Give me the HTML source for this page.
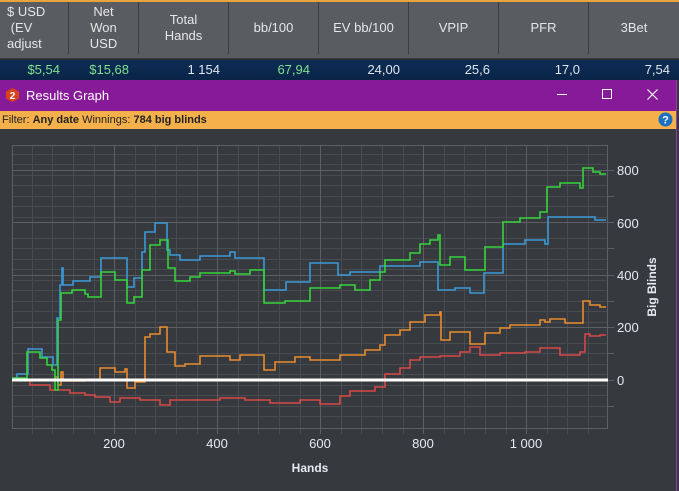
<!DOCTYPE html>
<html><head><meta charset="utf-8"><style>
*{margin:0;padding:0;box-sizing:border-box}
body{width:679px;height:491px;background:#36393d;font-family:"Liberation Sans",sans-serif;overflow:hidden;position:relative}
.hdr{position:absolute;left:0;top:0;width:679px;height:58px;background:#595d61;border-top:2px solid #e8a33c}
.col{position:absolute;top:2px;height:52px;display:flex;align-items:center;justify-content:center;text-align:center;color:#e6e6e6;font-size:13px;line-height:16px;border-right:1px solid #3a3d40}
.row{position:absolute;left:0;top:59px;width:679px;height:21px;background:linear-gradient(#0c2c56,#0a2446);border-top:1px solid #2a2d30}
.v{position:absolute;top:2px;font-size:13px;color:#dfe6ee;text-align:right}
.g{color:#7fe08e}
.title{position:absolute;left:0;top:80px;width:676px;height:31px;background:#871a99;color:#fff;font-size:13px}
.filter{position:absolute;left:0;top:111px;width:676px;height:18px;background:#f4b04a;font-size:11px;color:#222;padding:3px 0 0 2px}
.rb{position:absolute;left:676px;top:80px;width:3px;height:411px;background:#36393d;border-left:1px solid #9b3aad}
</style></head><body>
<div class="hdr"></div>
<div class="col" style="left:0;width:69px;justify-content:flex-start;padding-left:7px;text-align:left">$ USD<br>&nbsp;(EV<br>adjust</div>
<div class="col" style="left:69px;width:70px">Net<br>Won<br>USD</div>
<div class="col" style="left:139px;width:90px">Total<br>Hands</div>
<div class="col" style="left:229px;width:90px">bb/100</div>
<div class="col" style="left:319px;width:90px">EV bb/100</div>
<div class="col" style="left:409px;width:90px">VPIP</div>
<div class="col" style="left:499px;width:90px">PFR</div>
<div class="col" style="left:589px;width:90px;border-right:none">3Bet</div>
<div class="row">
<span class="v g" style="right:619px">$5,54</span>
<span class="v g" style="right:550px">$15,68</span>
<span class="v" style="right:459px">1 154</span>
<span class="v g" style="right:369px">67,94</span>
<span class="v" style="right:279px">24,00</span>
<span class="v" style="right:189px">25,6</span>
<span class="v" style="right:99px">17,0</span>
<span class="v" style="right:9px">7,54</span>
</div>
<div class="title">
<svg style="position:absolute;left:6px;top:8px" width="13" height="14" viewBox="0 0 13 14"><polygon points="6.5,0 13,3.5 13,10.5 6.5,14 0,10.5 0,3.5" fill="#d9401c"/><text x="6.5" y="11" font-size="10" font-weight="bold" fill="#fff" text-anchor="middle" font-family="Liberation Sans">2</text></svg>
<span style="position:absolute;left:26px;top:8px">Results Graph</span>
<div style="position:absolute;left:557px;top:95px"></div>
<div style="position:absolute;left:557px;top:14px;width:10px;height:1px;background:#fff"></div>
<div style="position:absolute;left:602px;top:9px;width:10px;height:10px;border:1px solid #fff"></div>
<svg style="position:absolute;left:647px;top:9px" width="11" height="11"><path d="M0.5 0.5L10.5 10.5M10.5 0.5L0.5 10.5" stroke="#fff" stroke-width="1.2"/></svg>
</div>
<div class="filter">Filter: <b>Any date</b> Winnings: <b>784 big blinds</b>
<svg style="position:absolute;left:658px;top:1px" width="15" height="15"><circle cx="7.5" cy="7.5" r="7" fill="#1a6fc1"/><text x="7.5" y="11.5" font-size="11" font-weight="bold" fill="#fff" text-anchor="middle" font-family="Liberation Sans">?</text></svg></div>
<div class="rb"></div>
<svg style="position:absolute;left:0;top:129px" width="676" height="362" viewBox="0 129 676 362">
<g stroke="#484c50" stroke-width="1">
<path d="M12 154.5H608M12 164.5H608M12 175.5H608M12 185.5H608M12 196.5H608M12 206.5H608M12 217.5H608M12 238.5H608M12 248.5H608M12 259.5H608M12 269.5H608M12 280.5H608M12 290.5H608M12 301.5H608M12 311.5H608M12 322.5H608M12 343.5H608M12 353.5H608M12 364.5H608M12 374.5H608M12 385.5H608M12 395.5H608M12 406.5H608M12 416.5H608"/>
<path d="M32.5 145V434M52.5 145V434M73.5 145V434M94.5 145V434M135.5 145V434M155.5 145V434M176.5 145V434M197.5 145V434M238.5 145V434M258.5 145V434M279.5 145V434M300.5 145V434M341.5 145V434M361.5 145V434M382.5 145V434M403.5 145V434M444.5 145V434M464.5 145V434M485.5 145V434M506.5 145V434M547.5 145V434M567.5 145V434M588.5 145V434"/>
</g>
<g stroke="#5c6064" stroke-width="1" fill="none">
<rect x="12.5" y="145.5" width="595" height="283"/>
<path d="M12 170.5H614M12 222.5H614M12 275.5H614M12 327.5H614M12 380.5H614M608 196.5H614M608 248.5H614M608 301.5H614M608 353.5H614M608 406.5H614"/>
<path d="M114.5 145V434M217.5 145V434M320.5 145V434M423.5 145V434M526.5 145V434"/>
</g>
<g fill="none" stroke-width="1.6" stroke-linejoin="miter">
<polyline stroke="#d84848" points="12,380 30,380 30,385 50,385 50,390 70,390 70,393 85,393 85,395 95,395 95,397 110,397 110,402 120,402 120,398 140,398 140,400 160,400 160,405 170,405 170,400 220,400 220,398 245,398 245,400 270,400 270,403 300,403 300,400 320,400 320,404 340,404 340,396 350,396 350,391 375,391 375,387 385,387 385,374 400,374 400,368 410,368 410,360 420,360 420,357 440,357 440,356 460,356 460,352 470,352 470,347 480,347 480,355 500,355 500,353 525,353 525,352 540,352 540,348 560,348 560,355 580,355 580,352 585,352 585,334 590,334 590,336 600,336 600,335 606,335"/>
<polyline stroke="#e88c2e" points="12,380 55,380 55,377 58,377 58,385 61,385 61,372 63,372 63,381 85,381 85,380 100,380 100,368 115,368 115,372 125,372 125,369 127,369 127,388 135,388 135,382 145,382 145,337 150,337 150,334 160,334 160,327 167,327 167,352 175,352 175,366 185,366 185,364 200,364 200,356 230,356 230,360 240,360 240,355 264,355 264,370 275,370 275,362 295,362 295,357 310,357 310,360 340,360 340,355 365,355 365,350 380,350 380,345 385,345 385,335 400,335 400,330 410,330 410,322 425,322 425,315 440,315 440,312 441,312 441,340 450,340 450,332 470,332 470,344 485,344 485,333 500,333 500,328 510,328 510,325 540,325 540,320 545,320 545,322 550,322 550,319 565,319 565,323 583,323 583,301 590,301 590,305 600,305 600,307 606,307"/>
<polyline stroke="#3a9ad8" points="12,378 17,378 17,374 28,374 28,349 42,349 42,357 53,357 53,365 57,365 57,318 60,318 60,285 62,285 62,268 63,268 63,285 73,285 73,281 90,281 90,277 101,277 101,258 127,258 127,287 134,287 134,278 142,278 142,252 145,252 145,232 155,232 155,223 167,223 167,250 170,250 170,255 180,255 180,260 200,260 200,256 230,256 230,252 235,252 235,258 264,258 264,290 286,290 286,282 310,282 310,263 338,263 338,275 350,275 350,272 380,272 380,266 420,266 420,262 438,262 438,290 455,290 455,288 470,288 470,293 484,293 484,273 503,273 503,244 525,244 525,240 545,240 545,244 548,244 548,217 595,217 595,220 606,220"/>
<polyline stroke="#35d43a" points="12,378 27,378 27,352 40,352 40,358 47,358 47,365 52,365 52,370 55,370 55,390 58,390 58,320 61,320 61,293 72,293 72,290 85,290 85,294 88,294 88,297 101,297 101,272 115,272 115,280 127,280 127,303 134,303 134,297 142,297 142,270 150,270 150,245 160,245 160,240 168,240 168,268 175,268 175,281 190,281 190,277 200,277 200,273 230,273 230,271 235,271 235,274 250,274 250,270 264,270 264,303 285,303 285,301 310,301 310,288 340,288 340,285 355,285 355,290 370,290 370,280 380,280 380,272 385,272 385,260 410,260 410,253 420,253 420,244 430,244 430,240 438,240 438,235 440,235 440,265 450,265 450,257 465,257 465,270 485,270 485,247 503,247 503,222 520,222 520,218 540,218 540,212 547,212 547,187 560,187 560,183 580,183 580,188 583,188 583,168 593,168 593,172 600,172 600,174 606,174"/>
</g>
<rect x="12" y="378.5" width="596" height="3" fill="#fff"/>
<g fill="#e6eaf0" font-size="13" font-family="Liberation Sans">
<text x="617" y="175">800</text><text x="617" y="228">600</text><text x="617" y="280">400</text><text x="617" y="332">200</text><text x="617" y="385">0</text>
<text x="114" y="448" text-anchor="middle">200</text><text x="217" y="448" text-anchor="middle">400</text><text x="320" y="448" text-anchor="middle">600</text><text x="423" y="448" text-anchor="middle">800</text><text x="526" y="448" text-anchor="middle">1 000</text>
<text x="310" y="472" text-anchor="middle" font-weight="bold" font-size="12">Hands</text>
<text transform="translate(656,287) rotate(-90)" text-anchor="middle" font-weight="bold" font-size="12">Big Blinds</text>
</g>
</svg>
</body></html>
